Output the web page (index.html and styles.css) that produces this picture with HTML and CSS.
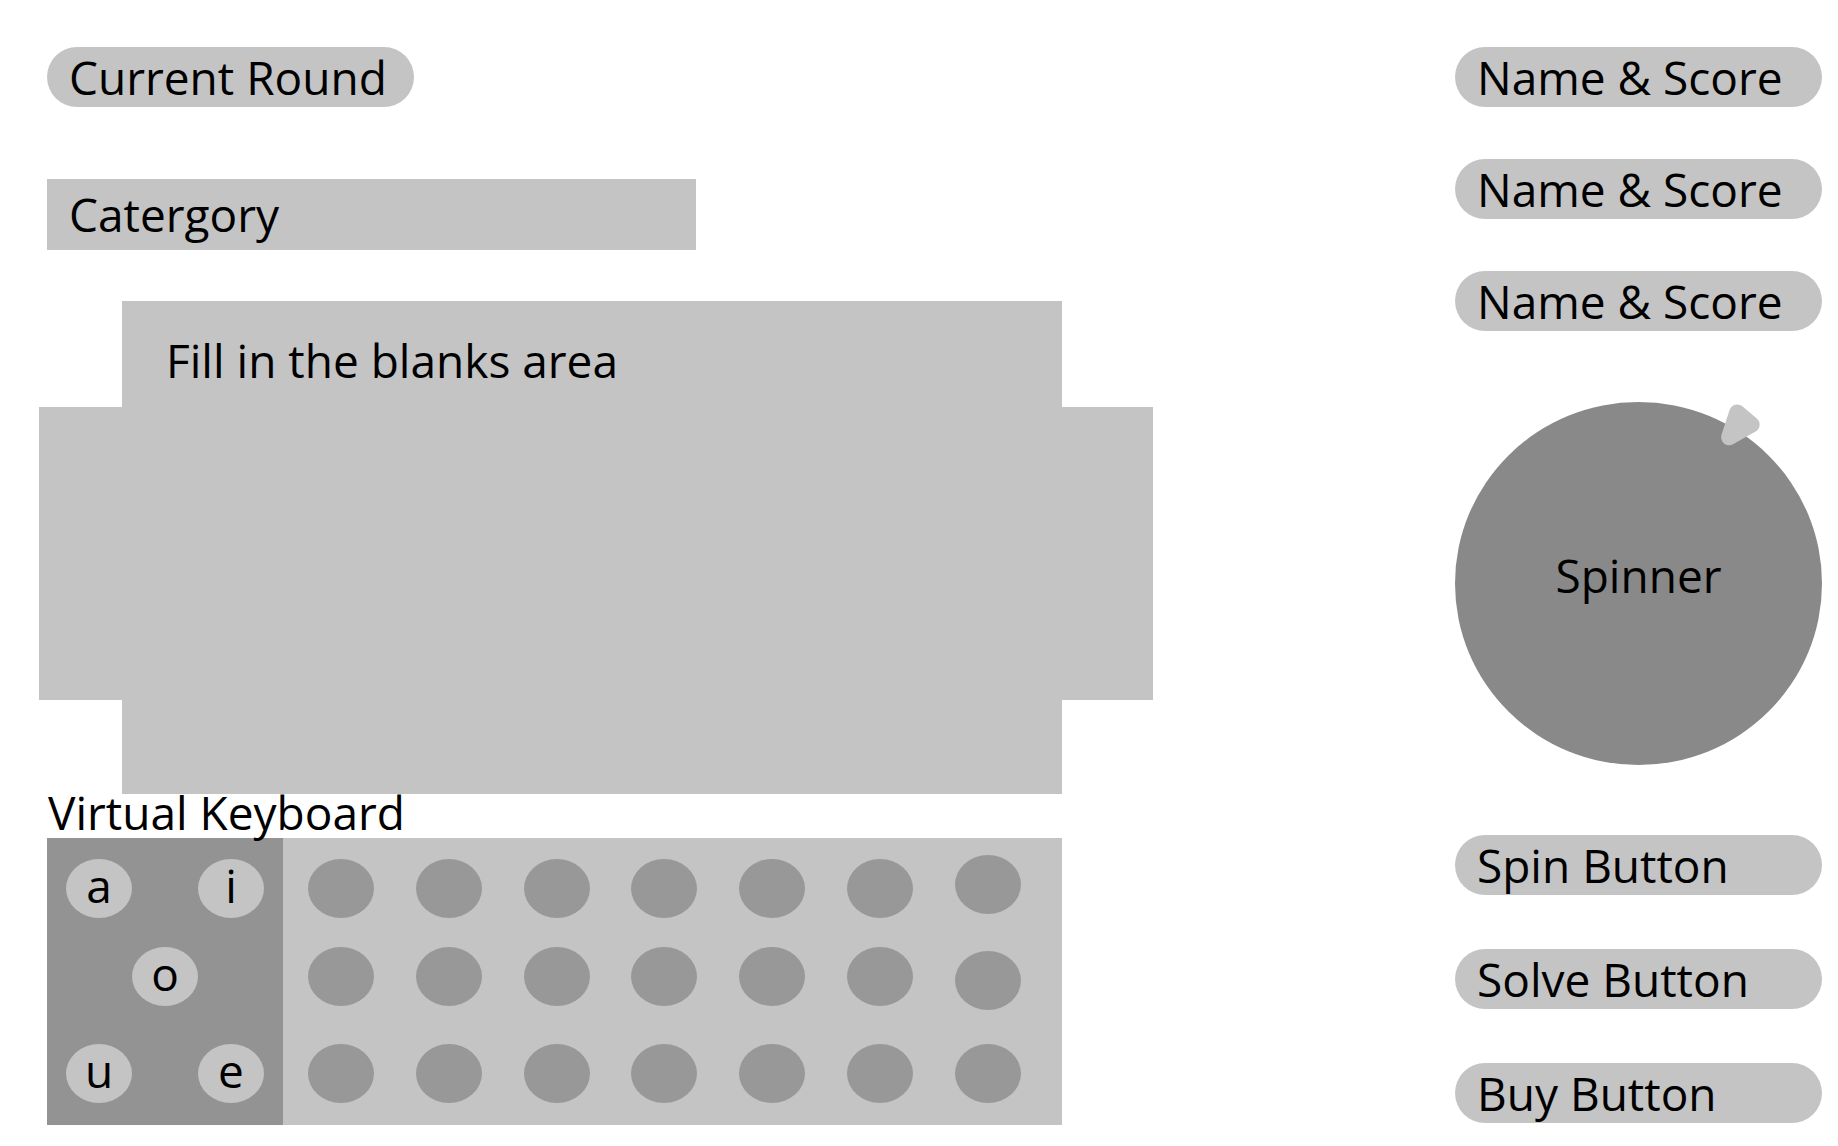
FILE: index.html
```html
<!DOCTYPE html>
<html lang="en">
<head>
<meta charset="utf-8">
<title>Wheel Game Wireframe</title>
<link rel="stylesheet" href="styles.css">
</head>
<body>
<div class="page">
  <main class="board">
    <div class="pill round">Current Round</div>
    <div class="category">Catergory</div>
    <div class="blanks">
      <div class="blanks-core">Fill in the blanks area</div>
      <div class="blanks-wide"></div>
    </div>
    <div class="kb-label">Virtual Keyboard</div>
    <div class="keyboard">
      <div class="vowels">
        <div class="key vowel k-a">a</div>
        <div class="key vowel k-i">i</div>
        <div class="key vowel k-o">o</div>
        <div class="key vowel k-u">u</div>
        <div class="key vowel k-e">e</div>
      </div>
      <div class="consonants">
        <div class="key blank"></div><div class="key blank"></div><div class="key blank"></div><div class="key blank"></div><div class="key blank"></div><div class="key blank"></div><div class="key blank up"></div>
        <div class="key blank"></div><div class="key blank"></div><div class="key blank"></div><div class="key blank"></div><div class="key blank"></div><div class="key blank"></div><div class="key blank down"></div>
        <div class="key blank"></div><div class="key blank"></div><div class="key blank"></div><div class="key blank"></div><div class="key blank"></div><div class="key blank"></div><div class="key blank"></div>
      </div>
    </div>
  </main>
  <aside class="side">
    <div class="players">
      <div class="pill">Name &amp; Score</div>
      <div class="pill">Name &amp; Score</div>
      <div class="pill">Name &amp; Score</div>
    </div>
    <div class="spinner">
      <div class="wheel">Spinner</div>
      <svg class="pointer" width="367" height="363" viewBox="0 0 367 363">
        <polygon points="282.2,10.5 296.7,22.6 274.1,35.3" fill="#c4c4c4" stroke="#c4c4c4" stroke-width="16" stroke-linejoin="round"/>
      </svg>
    </div>
    <div class="actions">
      <div class="pill">Spin Button</div>
      <div class="pill">Solve Button</div>
      <div class="pill">Buy Button</div>
    </div>
  </aside>
</div>
</body>
</html>
```
FILE: styles.css
```css
html, body {
  margin: 0;
  background: #ffffff;
}

body {
  font-family: "Open Sans", "Noto Sans", sans-serif;
  color: #000000;
  font-size: 46px;
}

.page {
  display: flex;
  justify-content: space-between;
  align-items: flex-start;
  padding: 47px 16px 0 39px;
  height: 1146px;
  box-sizing: border-box;
}

.board {
  display: flex;
  flex-direction: column;
  align-items: flex-start;
  width: 1114px;
}

.pill {
  width: 367px;
  height: 60px;
  line-height: 60px;
  border-radius: 30px;
  background: #c4c4c4;
  padding-left: 22px;
  box-sizing: border-box;
  white-space: nowrap;
}

.round {
  margin-left: 8px;
}

.category {
  margin: 72px 0 0 8px;
  width: 649px;
  height: 71px;
  line-height: 71px;
  background: #c4c4c4;
  padding-left: 22px;
  box-sizing: border-box;
}

.blanks {
  margin-top: 51px;
  display: grid;
  grid-template-columns: 83px 940px 91px;
  grid-template-rows: 106px 293px 94px;
}

.blanks-core {
  grid-column: 2;
  grid-row: 1 / 4;
  background: #c4c4c4;
  padding: 28px 0 0 44px;
}

.blanks-wide {
  grid-column: 1 / 4;
  grid-row: 2;
  background: #c4c4c4;
}

.kb-label {
  position: relative;
  z-index: 1;
  margin: 0 0 8px 9px;
  height: 36px;
  line-height: 36px;
  white-space: nowrap;
}

.keyboard {
  margin-left: 8px;
  display: flex;
  width: 1015px;
  height: 287px;
}

.vowels {
  width: 236px;
  background: #939393;
  display: grid;
  grid-template-columns: repeat(3, 66px);
  grid-template-rows: 88px 97px 59px;
  padding: 21px 19px 0;
  box-sizing: border-box;
}

.consonants {
  flex: 1;
  background: #c4c4c4;
  display: grid;
  grid-template-columns: repeat(7, 66px);
  column-gap: 41.75px;
  grid-template-rows: 88px 97px 59px;
  padding: 21px 0 0 25px;
}

.key {
  width: 66px;
  height: 59px;
  border-radius: 50%;
}

.vowel {
  background: #c4c4c4;
  line-height: 52px;
  text-align: center;
}

.k-a { grid-area: 1 / 1; }
.k-i { grid-area: 1 / 3; }
.k-o { grid-area: 2 / 2; }
.k-u { grid-area: 3 / 1; }
.k-e { grid-area: 3 / 3; }

.blank {
  background: #989898;
}

.up { margin-top: -4px; }
.down { margin-top: 4px; }

.side {
  width: 367px;
  display: flex;
  flex-direction: column;
}

.players {
  display: flex;
  flex-direction: column;
  gap: 52px;
}

.spinner {
  position: relative;
  margin-top: 71px;
  width: 367px;
  height: 363px;
}

.wheel {
  width: 100%;
  height: 100%;
  border-radius: 50%;
  background: #898989;
  display: flex;
  align-items: center;
  justify-content: center;
  padding-bottom: 18px;
  box-sizing: border-box;
}

.pointer {
  position: absolute;
  left: 0;
  top: 0;
  overflow: visible;
}

.actions {
  margin-top: 70px;
  display: flex;
  flex-direction: column;
  gap: 54px;
}
```
